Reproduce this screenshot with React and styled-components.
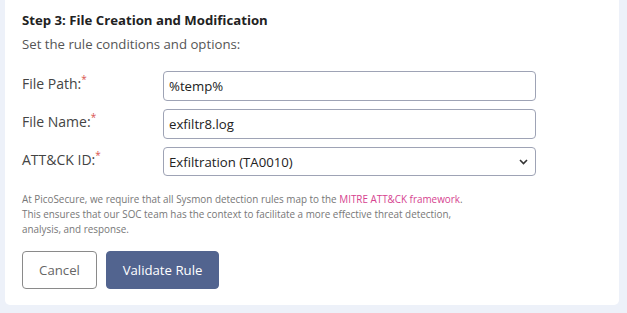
import React from "react";
import styled, { createGlobalStyle } from "styled-components";

const GlobalStyle = createGlobalStyle`
  body {
    margin: 0;
    background: #edf1f9;
    font-family: "Open Sans", "Noto Sans", sans-serif;
  }
`;

const fields = [
  { label: "File Path:", value: "%temp%" },
  { label: "File Name:", value: "exfiltr8.log" },
];

const App = () => {
  return (
    <>
      <GlobalStyle />
      <Page>
        <Card>
          <Title>Step 3: File Creation and Modification</Title>
          <Subtitle>Set the rule conditions and options:</Subtitle>
          <Form>
            {fields.map((f) => (
              <Row key={f.label}>
                <Label>
                  {f.label}
                  <Req>*</Req>
                </Label>
                <TextInput defaultValue={f.value} />
              </Row>
            ))}
            <Row>
              <Label>
                ATT&amp;CK ID:<Req>*</Req>
              </Label>
              <SelectWrap>
                <Select defaultValue="TA0010">
                  <option value="TA0010">Exfiltration (TA0010)</option>
                </Select>
                <Chevron width="9" height="6" viewBox="0 0 9 6">
                  <path d="M1 1l3.5 3.5L8 1" fill="none" stroke="#333" strokeWidth="1.6" />
                </Chevron>
              </SelectWrap>
            </Row>
          </Form>
          <Info>
            At PicoSecure, we require that all Sysmon detection rules map to the{" "}
            <Link href="#">MITRE ATT&amp;CK framework</Link>.
            <br />
            This ensures that our SOC team has the context to facilitate a more effective threat detection,
            <br />
            analysis, and response.
          </Info>
          <Actions>
            <Button>Cancel</Button>
            <Button primary>Validate Rule</Button>
          </Actions>
        </Card>
      </Page>
    </>
  );
};

const Page = styled.div`
  padding: 0 8px 7px 5px;
`;

const Card = styled.div`
  background: #fff;
  border-radius: 0 0 5px 5px;
  padding: 10px 17px 16px 17px;
`;

const Title = styled.h2`
  margin: 0;
  font-size: 13.2px;
  font-weight: 700;
  color: #222;
  line-height: 20px;
`;

const Subtitle = styled.p`
  margin: 4px 0 0 0;
  font-size: 13.2px;
  color: #555;
  line-height: 20px;
`;

const Form = styled.div`
  margin-top: 17px;
  display: flex;
  flex-direction: column;
  gap: 8px;
`;

const Row = styled.div`
  display: flex;
  align-items: flex-start;
`;

const Label = styled.label`
  width: 141px;
  flex-shrink: 0;
  font-size: 14px;
  color: #444;
  line-height: 20px;
  padding-top: 3px;
`;

const Req = styled.sup`
  color: #d9534f;
  font-size: 10px;
  line-height: 0;
`;

const TextInput = styled.input`
  box-sizing: border-box;
  width: 373px;
  height: 30px;
  border: 1px solid #9ea3b5;
  border-radius: 4px;
  padding: 0 5px;
  font-family: inherit;
  font-size: 13.2px;
  color: #222;
  background: #fff;
`;

const SelectWrap = styled.div`
  position: relative;
  width: 373px;
`;

const Select = styled.select`
  box-sizing: border-box;
  appearance: none;
  width: 100%;
  height: 29px;
  border: 1px solid #9ea3b5;
  border-radius: 4px;
  padding: 0 5px;
  font-family: inherit;
  font-size: 13.2px;
  color: #222;
  background: #fff;
`;

const Chevron = styled.svg`
  position: absolute;
  right: 8px;
  top: 12px;
  pointer-events: none;
`;

const Info = styled.p`
  margin: 16px 0 0 0;
  font-size: 9.9px;
  line-height: 15px;
  color: #777;
`;

const Link = styled.a`
  color: #d6428f;
  text-decoration: none;
`;

const Actions = styled.div`
  margin-top: 14px;
  display: flex;
  gap: 9px;
`;

const Button = styled.button`
  box-sizing: border-box;
  height: 38px;
  width: ${(p) => (p.primary ? "113px" : "75px")};
  padding: 0;
  border-radius: 4px;
  border: 1px solid ${(p) => (p.primary ? "#52648f" : "#8a8a8a")};
  background: ${(p) => (p.primary ? "#52648f" : "#fff")};
  color: ${(p) => (p.primary ? "#fff" : "#666")};
  font-family: inherit;
  font-size: 13.2px;
  cursor: pointer;
`;

export default App;
